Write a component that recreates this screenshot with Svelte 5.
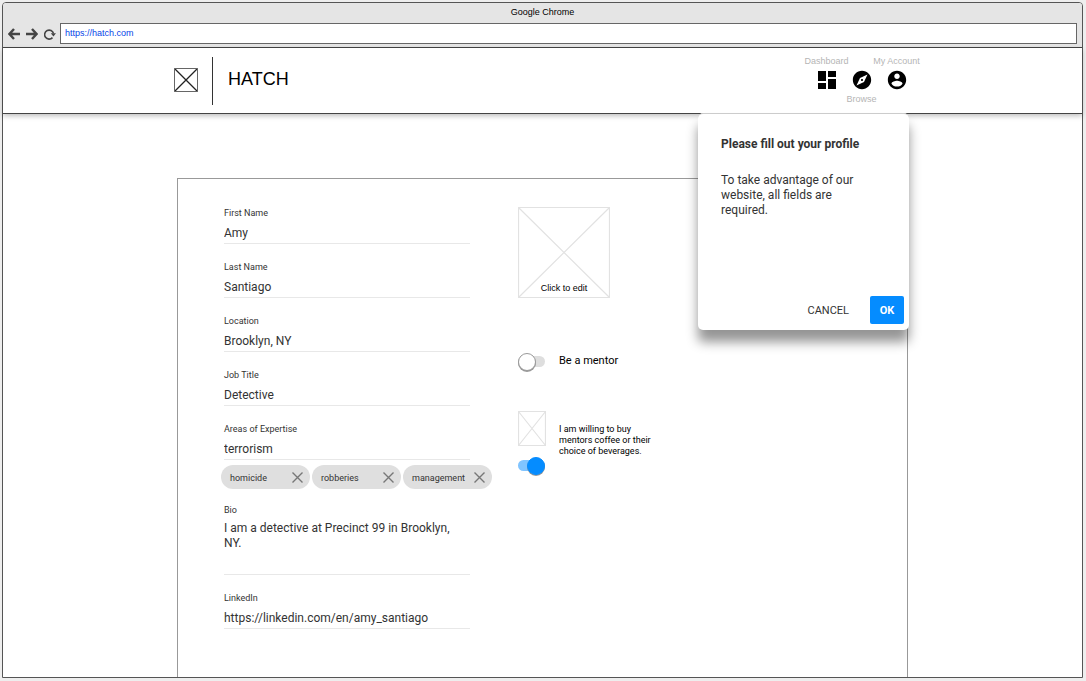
<script>
  let address = $state('https://hatch.com');
  let profile = $state({
    first: 'Amy',
    last: 'Santiago',
    location: 'Brooklyn, NY',
    job: 'Detective',
    expertise: 'terrorism',
    bio: 'I am a detective at Precinct 99 in Brooklyn, NY.',
    linkedin: 'https://linkedin.com/en/amy_santiago'
  });
  let tags = $state(['homicide', 'robberies', 'management']);
  let mentor = $state(false);
  let beverages = $state(true);
  let open = $state(true);

  const fields = [
    { key: 'first', label: 'First Name' },
    { key: 'last', label: 'Last Name' },
    { key: 'location', label: 'Location' },
    { key: 'job', label: 'Job Title' },
    { key: 'expertise', label: 'Areas of Expertise' }
  ];

  function removeTag(tag) {
    tags = tags.filter((t) => t !== tag);
  }
</script>

<div class="window">
  <header class="chrome">
    <div class="title">Google Chrome</div>
    <div class="toolbar">
      <button class="tool" aria-label="Back">
        <svg width="12" height="12" viewBox="0 0 12 12"><path d="M12 6H2M6 1L1.5 6L6 11" /></svg>
      </button>
      <button class="tool" aria-label="Forward">
        <svg width="12" height="12" viewBox="0 0 12 12"><path d="M0 6H10M6 1L10.5 6L6 11" /></svg>
      </button>
      <button class="tool" aria-label="Reload">
        <svg width="12" height="12" viewBox="0 0 12 12">
          <path class="thin" d="M8.500 9.600A4.500 4.500 0 1 1 9.500 5.500" />
          <path class="solid" d="M6.800 5.200H12L9.400 8.600Z" />
        </svg>
      </button>
      <input class="address" type="text" aria-label="Address" bind:value={address} />
    </div>
  </header>

  <div class="site-header">
    <div class="bar">
      <svg class="logo" width="24" height="24" viewBox="0 0 24 24">
        <path class="cross" d="M.5 .5L23.500 23.500M23.500 .5L.5 23.500" />
        <path d="M.5 .5H23.500V23.500H.5Z" />
      </svg>
      <h1>HATCH</h1>
      <nav>
        <a href="#dashboard">
          <span>Dashboard</span>
          <svg width="24" height="24" viewBox="0 0 24 24"><path d="M3 13h8V3H3v10zm0 8h8v-6H3v6zm10 0h8V11h-8v10zm0-18v6h8V3h-8z" /></svg>
        </a>
        <a href="#browse" class="below">
          <span>Browse</span>
          <svg width="22" height="22" viewBox="0 0 24 24"><path d="M12 10.900c-.61 0-1.100.49-1.100 1.100s.49 1.100 1.100 1.100c.61 0 1.100-.49 1.100-1.100s-.49-1.100-1.100-1.100zM12 2C6.480 2 2 6.480 2 12s4.480 10 10 10 10-4.480 10-10S17.520 2 12 2zm2.190 12.190L6 18l3.810-8.190L18 6l-3.810 8.190z" /></svg>
        </a>
        <a href="#account">
          <span>My Account</span>
          <svg width="22" height="22" viewBox="0 0 24 24"><path d="M12 2C6.480 2 2 6.480 2 12s4.480 10 10 10 10-4.480 10-10S17.520 2 12 2zm0 3c1.660 0 3 1.340 3 3s-1.340 3-3 3-3-1.340-3-3 1.340-3 3-3zm0 14.200c-2.500 0-4.710-1.280-6-3.220.03-1.990 4-3.080 6-3.080 1.990 0 5.970 1.090 6 3.080-1.290 1.940-3.500 3.220-6 3.220z" /></svg>
        </a>
      </nav>
    </div>
  </div>

  <main>
    <form class="card" onsubmit={(e) => e.preventDefault()}>
      <div class="details">
        {#each fields as f}
          <div class="field">
            <label for={f.key}>{f.label}</label>
            <input id={f.key} type="text" bind:value={profile[f.key]} />
          </div>
        {/each}
        <ul class="tags">
          {#each tags as tag}
            <li>
              {tag}
              <button type="button" aria-label="Remove {tag}" onclick={() => removeTag(tag)}>
                <svg width="11" height="11" viewBox="0 0 11 11"><path d="M.5 .5L10.500 10.500M10.500 .5L.5 10.500" /></svg>
              </button>
            </li>
          {/each}
        </ul>
        <div class="field">
          <label for="bio">Bio</label>
          <textarea id="bio" bind:value={profile.bio}></textarea>
        </div>
        <div class="field">
          <label for="linkedin">LinkedIn</label>
          <input id="linkedin" type="text" bind:value={profile.linkedin} />
        </div>
      </div>

      <div class="options">
        <button type="button" class="photo">
          <svg width="92" height="91" viewBox="0 0 92 91"><path d="M.5 .5H91.500V90.500H.5ZM.5 .5L91.500 90.500M91.500 .5L.5 90.500" /></svg>
          <span>Click to edit</span>
        </button>
        <div class="option">
          <input id="mentor" class="switch" type="checkbox" bind:checked={mentor} />
          <label class="big" for="mentor">Be a mentor</label>
        </div>
        <div class="option offer">
          <div class="stack">
            <svg width="28" height="35" viewBox="0 0 28 35"><path d="M.5 .5H27.500V34.500H.5ZM.5 .5L27.500 34.500M27.500 .5L.5 34.500" /></svg>
            <input id="beverages" class="switch" type="checkbox" bind:checked={beverages} />
          </div>
          <label for="beverages">I am willing to buy mentors coffee or their choice of beverages.</label>
        </div>
      </div>
    </form>

    {#if open}
      <div class="dialog" role="dialog" aria-labelledby="dialog-title">
        <h2 id="dialog-title">Please fill out your profile</h2>
        <p>To take advantage of our website, all fields are required.</p>
        <div class="actions">
          <button class="cancel" onclick={() => (open = false)}>CANCEL</button>
          <button class="ok" onclick={() => (open = false)}>OK</button>
        </div>
      </div>
    {/if}
  </main>
</div>

<style>
  :global(body) {
    background: #eee;
  }
  .window, .window * {
    box-sizing: border-box;
  }
  .window {
    display: flex;
    flex-direction: column;
    min-height: calc(100vh - 5px);
    margin: 2px 3px 3px 2px;
    border: 1px solid #555;
    border-radius: 4px 4px 0 0;
    background: #fff;
    font: 9px/12px Roboto, sans-serif;
    color: #333;
  }
  button, input, textarea {
    margin: 0;
    padding: 0;
    border: 0;
    background: none;
    font: inherit;
    color: inherit;
  }
  button {
    cursor: pointer;
  }
  svg {
    display: block;
    flex: none;
    fill: none;
  }

  .chrome {
    padding: 3px 5px;
    border-bottom: 1px solid #444;
    border-radius: 3px 3px 0 0;
    background: #e5e5e5;
    font-family: "Liberation Sans", Arial, sans-serif;
    color: #000;
  }
  .title {
    text-align: center;
  }
  .toolbar {
    display: flex;
    align-items: center;
    gap: 6px;
    margin-top: 5px;
  }
  .tool svg {
    stroke: #444;
    stroke-width: 2.4;
  }
  .tool .thin {
    stroke-width: 1.6;
  }
  .tool .solid {
    fill: #444;
    stroke: none;
  }
  .address {
    flex: 1;
    height: 21px;
    margin-left: -2px;
    padding: 0 4px 2px;
    border: 1px solid #666;
    background: #fff;
    color: #0645e8;
  }

  .site-header {
    position: relative;
    padding: 9px 16px 8px;
    border-bottom: 1px solid #444;
    background: #fff;
    box-shadow: 0 2px 5px rgba(0, 0, 0, .25);
  }
  .bar {
    display: flex;
    align-items: center;
    max-width: 743px;
    margin: 0 auto;
    padding-left: 3px;
    font-family: "Liberation Sans", Arial, sans-serif;
  }
  .logo {
    margin-bottom: 2px;
    stroke: #666;
  }
  .logo .cross {
    stroke: #222;
    stroke-width: 1.3;
  }
  h1 {
    height: 48px;
    margin: 0 0 0 14px;
    padding-left: 15px;
    border-left: 1px solid #333;
    font-size: 18px;
    font-weight: 400;
    line-height: 44px;
    color: #000;
  }
  nav {
    display: flex;
    align-self: flex-start;
    margin-left: auto;
  }
  nav a {
    display: flex;
    flex-direction: column;
    align-items: center;
    gap: 3px;
    width: 35px;
    height: 46px;
    white-space: nowrap;
    color: #b5b5b5;
    text-decoration: none;
  }
  nav span {
    line-height: 8px;
  }
  nav svg {
    height: 24px;
    fill: #000;
  }
  nav .below {
    flex-direction: column-reverse;
  }

  main {
    position: relative;
    display: flex;
    flex: 1;
    width: calc(100% - 32px);
    max-width: 731px;
    margin: 0 auto;
    padding-top: 64px;
  }
  .card {
    display: grid;
    flex: 1;
    grid-template-columns: minmax(0, 246px) minmax(0, 1fr);
    column-gap: 48px;
    padding: 28px 46px 29px;
    border: 1px solid #999;
    border-bottom: 0;
  }
  .field {
    display: flex;
    flex-direction: column;
    margin-bottom: 17px;
  }
  .field input, .field textarea {
    width: 100%;
    height: 25px;
    padding-top: 4px;
    border-bottom: 1px solid #e8e8e8;
    border-radius: 0;
    font-size: 12px;
    line-height: 15px;
  }
  .field textarea {
    height: 59px;
    padding: 5px 8px 0 0;
    resize: none;
    overflow: hidden;
  }
  .tags {
    display: flex;
    gap: 2px;
    width: max-content;
    margin: -12px 0 15px -3px;
    padding: 0;
    list-style: none;
  }
  .tags li {
    display: flex;
    align-items: center;
    justify-content: space-between;
    width: 89px;
    height: 24px;
    padding: 1px 7px 0 9px;
    border-radius: 12px;
    background: #dfdfdf;
  }
  .tags svg {
    stroke: #777;
    stroke-width: 1.4;
  }

  .options {
    display: flex;
    flex-direction: column;
    align-items: flex-start;
    color: #000;
  }
  .options svg {
    stroke: #e2e2e2;
    stroke-width: 1.2;
  }
  .photo {
    display: grid;
    font-family: "Liberation Sans", Arial, sans-serif;
  }
  .photo svg, .photo span {
    grid-area: 1 / 1;
  }
  .photo span {
    align-self: end;
    margin-bottom: 4px;
  }
  .option {
    display: flex;
    align-items: center;
    gap: 14px;
    margin-top: 55px;
  }
  .option label {
    width: 100px;
    line-height: 11px;
  }
  .option .big {
    padding-bottom: 2px;
    font-size: 11px;
  }
  .offer {
    align-items: flex-start;
    margin-top: 42px;
  }
  .offer label {
    margin-top: 13px;
  }
  .stack {
    display: grid;
    gap: 11px;
    width: 27px;
  }
  .switch {
    appearance: none;
    display: flex;
    align-items: center;
    width: 27px;
    height: 11px;
    margin: 3px 0 2px;
    border-radius: 6px;
    background: #dedede;
    cursor: pointer;
  }
  .switch::before {
    content: "";
    flex: none;
    width: 16px;
    height: 16px;
    border: 1px solid #999;
    border-radius: 50%;
    background: #fff;
    box-shadow: 0 1px 0 #999;
  }
  .switch:checked {
    justify-content: flex-end;
    background: #80c4ff;
  }
  .switch:checked::before {
    border-color: #058cff;
    background: #058cff;
  }

  .dialog {
    position: absolute;
    top: -1px;
    right: -1px;
    display: flex;
    flex-direction: column;
    width: 211px;
    min-height: 217px;
    padding: 23px 5px 6px 23px;
    border-top: 1px solid #ccc;
    border-radius: 5px;
    background: #fff;
    box-shadow: 0 12px 12px rgba(0, 0, 0, .42);
    font-size: 12px;
    line-height: 15px;
  }
  .dialog h2 {
    margin: 0;
    font-size: 12px;
    font-weight: 700;
  }
  .dialog p {
    width: 150px;
    margin: 21px 0 0;
  }
  .actions {
    display: flex;
    justify-content: flex-end;
    gap: 21px;
    margin-top: auto;
  }
  .actions button {
    height: 28px;
    font-size: 11px;
  }
  .ok {
    width: 34px;
    border-radius: 2px;
    background: #058cff;
    font-weight: 700;
    color: #fff;
  }
</style>
